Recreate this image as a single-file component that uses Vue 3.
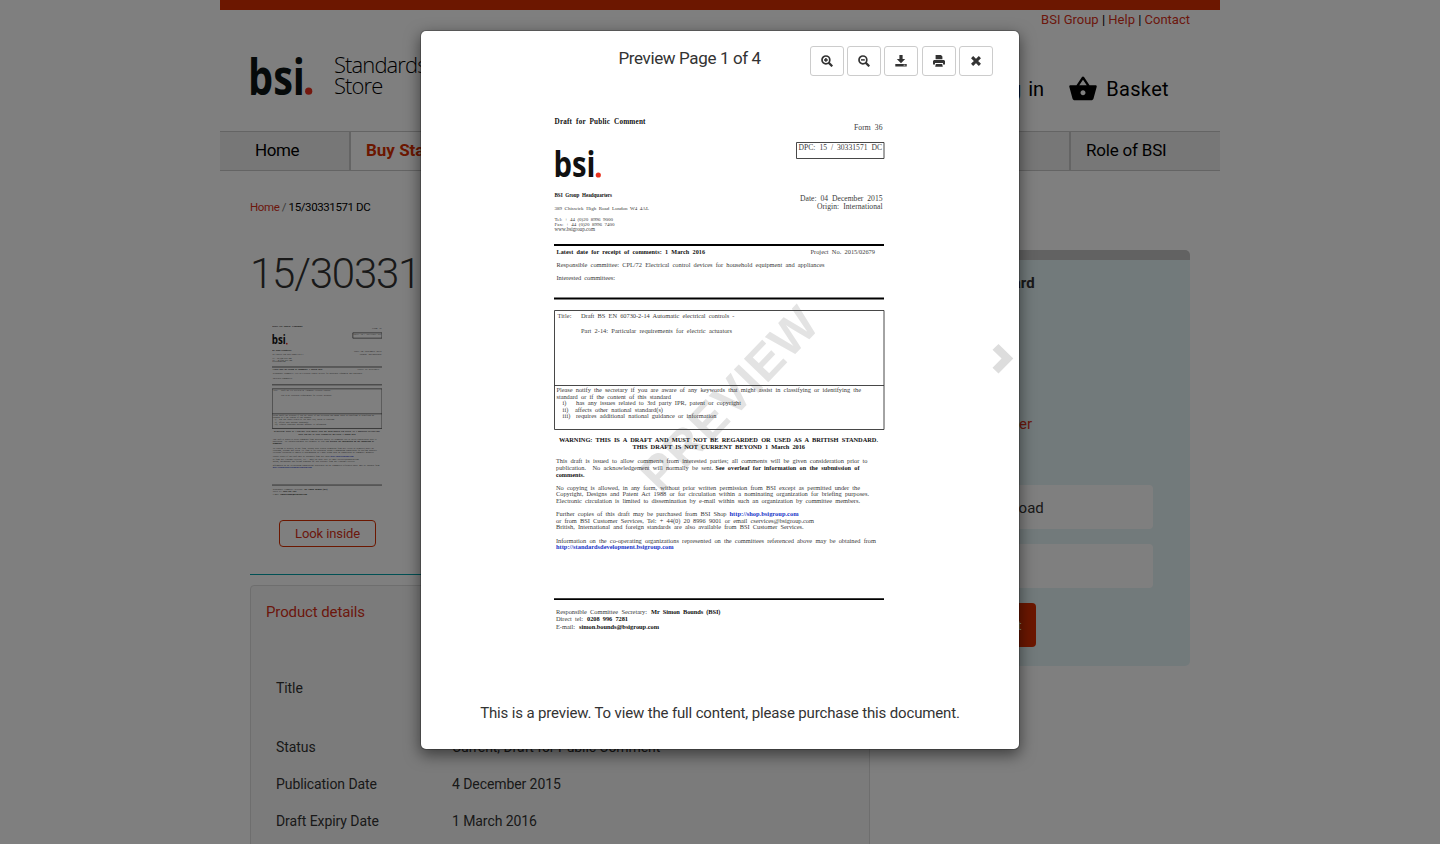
<script setup>
import { h } from 'vue'

// Each line: [text, x, baseline, width, size, bold, link]
const lines = [
  ['Draft for Public Comment', 554.5, 124, 91, 7.2, 1],
  ['Form 36', 854, 130, 28.5, 7.6],
  ['DPC: 15 / 30331571 DC', 798.5, 150.2, 83.5, 7.6],
  ['BSI Group Headquarters', 554.5, 197, 57.5, 5.1, 1],
  ['389 Chiswick High Road London W4 4AL', 554.5, 210, 94.5, 5],
  ['Tel: + 44 (0)20 8996 9000', 554.5, 220.5, 58.5, 5],
  ['Fax: + 44 (0)20 8996 7400', 554.5, 226, 60, 5],
  ['www.bsigroup.com', 554.5, 231.2, 40.5, 5.2],
  ['Date: 04 December 2015', 800, 201, 82.5, 7.6],
  ['Origin: International', 817, 208.7, 65.5, 7.6],
  ['Latest date for receipt of comments: 1 March 2016', 556.5, 253.5, 148.5, 6.2, 1],
  ['Project No. 2015/02679', 810.5, 253.5, 64.5, 6.4],
  ['Responsible committee: CPL/72 Electrical control devices for household equipment and appliances', 556.5, 266.8, 268, 6.4],
  ['Interested committees:', 556.5, 279.8, 58.5, 6.4],
  ['Title:', 557.5, 318, 14, 6.4],
  ['Draft BS EN 60730-2-14 Automatic electrical controls -', 581, 318, 153.5, 6.4],
  ['Part 2-14: Particular requirements for electric actuators', 581, 333, 151, 6.4],
  ['Please notify the secretary if you are aware of any keywords that might assist in classifying or identifying the', 556.5, 392, 304.5, 6.4],
  ['standard or if the content of this standard', 556.5, 398.7, 114.5, 6.4],
  ['i)', 562.5, 405, 4, 6.4],
  ['has any issues related to 3rd party IPR, patent or copyright', 576, 405, 165, 6.4],
  ['ii)', 562.5, 411.7, 6, 6.4],
  ['affects other national standard(s)', 575, 411.7, 88, 6.4],
  ['iii)', 562.5, 418, 8, 6.4],
  ['requires additional national guidance or information', 576, 418, 140.5, 6.4],
  ['WARNING: THIS IS A DRAFT AND MUST NOT BE REGARDED OR USED AS A BRITISH STANDARD.', 559, 441.5, 319, 6.4, 1],
  ['THIS DRAFT IS NOT CURRENT BEYOND 1 March 2016', 632.5, 449, 172.5, 6.4, 1],
  ['This draft is issued to allow comments from interested parties; all comments will be given consideration prior to', 556, 463.2, 311.5, 6.4],
  ['publication.\u00a0 No acknowledgement will normally be sent.', 556, 470, 157, 6.4],
  ['See overleaf for information on the submission of', 715.5, 470, 144, 6.2, 1],
  ['comments.', 556, 476.5, 28.5, 6.2, 1],
  ['No copying is allowed, in any form, without prior written permission from BSI except as permitted under the', 556, 489.8, 304, 6.4],
  ['Copyright, Designs and Patent Act 1988 or for circulation within a nominating organization for briefing purposes.', 556, 496.4, 313, 6.4],
  ['Electronic circulation is limited to dissemination by e-mail within such an organization by committee members.', 556, 503, 304, 6.4],
  ['Further copies of this draft may be purchased from BSI Shop', 556, 516.2, 170.5, 6.4],
  ['http://shop.bsigroup.com', 729.5, 516.2, 69, 6.4, 1, 1],
  ['or from BSI Customer Services, Tel: + 44(0) 20 8996 9001 or email cservices@bsigroup.com', 556, 522.8, 258, 6.4],
  ['British, International and foreign standards are also available from BSI Customer Services.', 556, 529.3, 247.5, 6.4],
  ['Information on the co-operating organizations represented on the committees referenced above may be obtained from', 556, 542.7, 320, 6.4],
  ['http://standardsdevelopment.bsigroup.com', 556, 549.4, 117.5, 6.4, 1, 1],
  ['Responsible Committee Secretary:', 556, 614, 91, 6.4],
  ['Mr Simon Bounds (BSI)', 651, 614, 69.5, 6.4, 1],
  ['Direct tel:', 556, 621.4, 27, 6.4],
  ['0208 996 7281', 587, 621.4, 41, 6.4, 1],
  ['E-mail:', 556, 629, 19, 6.4],
  ['simon.bounds@bsigroup.com', 579, 629, 80, 6.4, 1],
]

const serif = '"Liberation Serif", serif'
const sans = '"Open Sans", sans-serif'

function DocumentPage({ watermark }) {
  return h('svg', { viewBox: '554 110 331 530', 'aria-label': 'Document page' }, [
    watermark && h('text', {
      x: 0, y: 0, textLength: 232, 'font-size': 49, 'font-weight': 700, fill: '#e3e3e3',
      'font-family': '"Liberation Sans", sans-serif', transform: 'translate(661 494.5) rotate(-46.3)',
    }, 'PREVIEW'),
    h('text', {
      x: 553.5, y: 177, textLength: 42, lengthAdjust: 'spacingAndGlyphs', 'font-size': 35,
      'font-weight': 700, fill: '#111', 'font-family': sans,
    }, 'bsi'),
    h('circle', { cx: 598.3, cy: 175, r: 2.6, fill: '#e8311f' }),
    h('path', { d: 'M554 245h330M554 298.5h330M554 599.2h330', stroke: '#000', 'stroke-width': 1.8 }),
    h('path', {
      d: 'M796.5 142.5h87.5v16h-87.5zM554.5 310.5h329.5v119h-329.5zM554.5 385.5h329.5',
      stroke: '#333', 'stroke-width': watermark ? 0.9 : 2, fill: 'none',
    }),
    ...lines.map(([t, x, y, w, size, bold, link]) =>
      h('text', {
        x, y, textLength: w, 'font-size': size, 'font-family': serif,
        'font-weight': bold ? 700 : 400,
        'word-spacing': size * 0.26,
        fill: link ? '#1834c8' : bold ? '#111' : '#3a3a3a',
      }, t)),
  ])
}
DocumentPage.props = { watermark: Boolean }
</script>

<template>
  <div class="screen">
    <div class="page">
      <div class="stripe"></div>
      <header>
        <div class="util"><a>BSI Group</a> | <a>Help</a> | <a>Contact</a></div>
        <div class="brand">
          <svg class="logo" width="66" height="44" viewBox="0 0 66 44">
            <text x="-2" y="41" textLength="57" lengthAdjust="spacingAndGlyphs" class="logo-text">bsi</text>
            <circle cx="58.7" cy="37.2" r="3.6" fill="#e8311f" />
          </svg>
          <div class="store">Standards<br>Store</div>
          <div class="account">
            <span class="login">Log in</span>
            <svg width="30" height="30" viewBox="0 0 24 24"><path d="M17.21 9l-4.38-6.56c-.19-.28-.51-.42-.83-.42-.32 0-.64.14-.83.43L6.79 9H2c-.55 0-1 .45-1 1 0 .09.01.18.04.27l2.54 9.27c.23.84 1 1.46 1.92 1.46h13c.92 0 1.69-.62 1.93-1.46l2.54-9.27L23 10c0-.55-.45-1-1-1h-4.79zM9 9l3-4.4L15 9H9zm3 8c-1.1 0-2-.9-2-2s.9-2 2-2 2 .9 2 2-.9 2-2 2z" /></svg>
            <span class="basket">Basket</span>
          </div>
        </div>
      </header>
      <nav>
        <div class="nav-home">Home</div>
        <div class="nav-buy">Buy Standards</div>
        <div class="nav-rest"></div>
        <div class="nav-role">Role of BSI</div>
      </nav>
      <div class="crumbs"><a>Home</a> <i>/</i> 15/30331571 DC</div>
      <div class="columns">
        <main>
          <h1>15/30331571 DC</h1>
          <div class="thumb">
            <DocumentPage class="thumb-doc" />
            <button class="look">Look inside</button>
          </div>
          <section class="details">
            <h2>Product details</h2>
            <dl>
              <dt class="tall">Title</dt><dd class="tall"></dd>
              <dt>Status</dt><dd>Current, Draft for Public Comment</dd>
              <dt>Publication Date</dt><dd>4 December 2015</dd>
              <dt>Draft Expiry Date</dt><dd>1 March 2016</dd>
            </dl>
          </section>
        </main>
        <aside>
          <h3>Buy this standard</h3>
          <a class="member">Become a member</a>
          <div class="option">Download</div>
          <div class="option"></div>
          <button class="add">Add to basket</button>
        </aside>
      </div>
    </div>

    <div class="backdrop">
      <div class="modal">
        <div class="bar">
          <span class="title">Preview Page 1 of 4</span>
          <div class="tools">
            <button><svg viewBox="0 0 12 12"><circle cx="4.9" cy="4.9" r="3.9" fill="none" stroke="#333" stroke-width="1.7" /><path d="M7.6 7.6l3.7 3.7" stroke="#333" stroke-width="2.2" /><path d="M4.9 3v3.8M3 4.9h3.8" stroke="#333" stroke-width="1.5" /></svg></button>
            <button><svg viewBox="0 0 12 12"><circle cx="4.9" cy="4.9" r="3.9" fill="none" stroke="#333" stroke-width="1.7" /><path d="M7.6 7.6l3.7 3.7" stroke="#333" stroke-width="2.2" /><path d="M3 4.9h3.8" stroke="#333" stroke-width="1.5" /></svg></button>
            <button><svg viewBox="0 0 12 12"><path d="M4.4 0h3.2v4h2.6L6 8.2 1.8 4h2.6zM.3 9h11.4v2.6H.3z" fill="#333" /><path d="M8.6 10.2h1.8" stroke="#fff" stroke-width=".7" /></svg></button>
            <button><svg viewBox="0 0 12 12"><path d="M3 0h5l1.4 1.6V4.2H2.6V0zM1 5h10l1 1v3.6h-2V8H2v1.6H0V6zM2.8 9h6.4l.6 2.7H2.2z" fill="#333" /></svg></button>
            <button><svg viewBox="0 0 12 12"><path d="M2.1 2.1l7.8 7.8M9.9 2.1L2.1 9.9" stroke="#333" stroke-width="3" /></svg></button>
          </div>
        </div>
        <DocumentPage class="doc" watermark />
        <div class="note">This is a preview. To view the full content, please purchase this document.</div>
        <svg class="next" width="22" height="30" viewBox="0 0 22 30"><path d="M6.5 0L21.3 14.6 6.5 29.5.5 23.7 9.6 14.6.5 5.8z" fill="#ddd" /></svg>
      </div>
    </div>
  </div>
</template>

<style>
html, body { margin: 0; overflow: hidden; background: #fff; }
</style>

<style scoped>
* { box-sizing: border-box; }
.screen { position: relative; width: 1440px; height: 844px; overflow: hidden; font-family: Roboto, "Open Sans", sans-serif; color: #333; }
.page { width: 1000px; height: 844px; margin: 0 auto; overflow: hidden; }
a { color: #d83018; }
button { font-family: inherit; padding: 0; }
.stripe { height: 10px; background: #d82f00; }
header { height: 121px; padding: 0 30px; }
.util { height: 19px; line-height: 19px; font-size: 13px; text-align: right; color: #000; }
.brand { display: flex; align-items: flex-start; padding-top: 25px; }
.logo { flex: none; overflow: visible; }
.logo-text { font: 700 50px "Open Sans", sans-serif; fill: #0c1414; }
.store { margin: 0 0 0 18px; font: 300 22px/21px "Open Sans", sans-serif; letter-spacing: -.9px; color: #000; }
.account { margin: 19px 21px 0 auto; display: flex; align-items: center; font-size: 20px; line-height: 32px; color: #000; }
.account svg { margin: -1px 8px 0 24px; }
.login { word-spacing: 2px; }
.basket { letter-spacing: .35px; }
nav { height: 40px; display: flex; border: solid #c8c8c8; border-width: 1px 0; background: #eee; font-size: 17px; line-height: 37px; color: #000; }
.nav-home { width: 131px; padding-left: 35px; border-right: 2px solid #c8c8c8; letter-spacing: -.4px; }
.nav-buy { width: 160px; padding-left: 15px; background: #fff; color: #d82f00; font-weight: 700; white-space: nowrap; }
.nav-rest { flex: 1; }
.nav-role { width: 151px; padding-left: 15px; border-left: 2px solid #c8c8c8; letter-spacing: -.2px; }
.crumbs { margin: 26px 0 0 30px; height: 20px; line-height: 20px; font-size: 11.5px; letter-spacing: -.4px; color: #000; }
.crumbs i { font-style: normal; color: #777; }
.columns { display: flex; gap: 20px; padding: 33px 30px 0; }
main { width: 620px; }
h1 { margin: 0; height: 48px; line-height: 48px; font-size: 42px; font-weight: 300; letter-spacing: -1.2px; }
.thumb { height: 277px; padding: 24px 0 0; border-bottom: 1px solid #00a0a8; }
.thumb-doc { display: block; margin-left: 22px; width: 110.33px; height: 176.67px; }
.look { display: block; margin: 21px 0 0 29px; width: 97px; height: 27px; border: 1px solid #d82f00; border-radius: 4px; background: none; color: #d83018; font-size: 13px; letter-spacing: -.1px; }
.details { margin-top: 10px; height: 300px; border: 1px solid #ddd; border-radius: 4px; background: #f7f7f7; padding: 15px; }
h2 { margin: 0 0 47px; font-size: 15px; line-height: 22px; font-weight: 400; letter-spacing: -.12px; color: #d83018; }
dl { margin: 0 0 0 10px; display: grid; grid-template-columns: 176px 1fr; font-size: 14px; line-height: 37px; letter-spacing: -.08px; color: #333; }
dt, dd { margin: 0; height: 37px; }
.tall { height: 59px; }
aside { width: 300px; height: 416px; border-top: 10px solid #c4c4c4; border-radius: 5px; background: #e5f4f7; padding: 12px 37px 0; }
h3 { margin: 0; line-height: 22px; height: 141px; font-size: 15px; text-indent: -10px; }
.member { display: block; height: 72px; line-height: 22px; font-size: 15px; text-indent: -21px; }
aside h3, .member, .option { white-space: nowrap; }
.option { height: 44px; margin-bottom: 15px; border-radius: 4px; background: #fff; padding-left: 50px; font-size: 15px; line-height: 46px; }
.add { width: 109px; height: 44px; border: 0; border-radius: 4px; background: #d82f00; color: #fff; font-size: 13px; }

.backdrop { position: absolute; inset: 0; background: rgba(0, 0, 0, .5); padding-top: 30px; }
.modal { position: relative; width: 600px; height: 720px; margin: 0 auto; border: 1px solid rgba(0, 0, 0, .2); background: #fff; background-clip: padding-box; border-radius: 6px; box-shadow: 0 5px 15px rgba(0, 0, 0, .5); }
.bar { display: flex; height: 79px; padding: 15px 26px 0 0; justify-content: flex-end; }
.title { width: 191.4px; font-size: 17px; line-height: 24px; letter-spacing: -.37px; white-space: nowrap; }
.tools { display: flex; gap: 3.3px; }
.tools button { width: 34px; height: 30px; display: grid; place-items: center; border: 1px solid #ccc; border-radius: 3px; background: #fff; }
.tools svg { width: 12px; height: 12px; }
.doc { display: block; width: 331px; height: 530px; margin-left: 133px; }
.note { margin-top: 61px; text-align: center; font-size: 15px; line-height: 24px; letter-spacing: -.15px; }
.next { position: absolute; left: 571px; top: 313px; }
</style>
